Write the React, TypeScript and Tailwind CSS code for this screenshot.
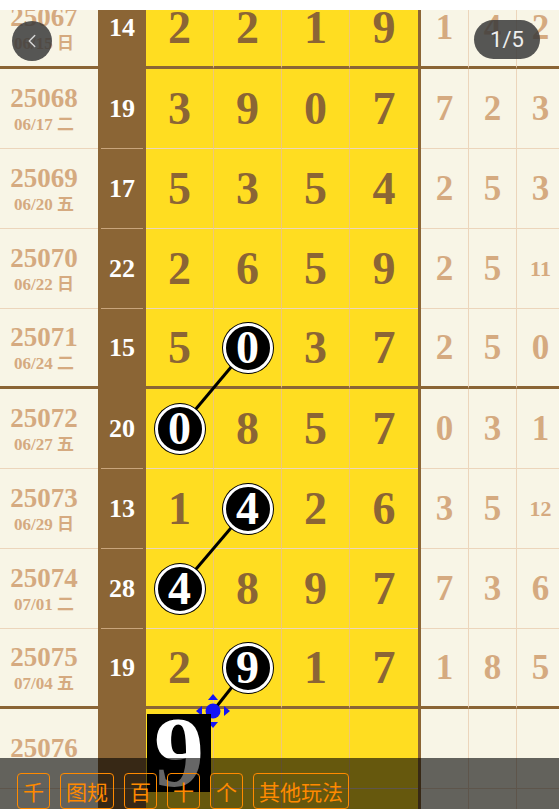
import { ChevronLeft } from "lucide-react";

type Row = {
  issue: string;
  date?: string;
  sum?: number;
  digits: (number | null)[];
  rest: (number | null)[];
  ball?: number;
  thick?: boolean;
};

const rows: Row[] = [
  { issue: "25067", date: "06/15 日", sum: 14, digits: [2, 2, 1, 9], rest: [1, 4, 2], thick: true },
  { issue: "25068", date: "06/17 二", sum: 19, digits: [3, 9, 0, 7], rest: [7, 2, 3] },
  { issue: "25069", date: "06/20 五", sum: 17, digits: [5, 3, 5, 4], rest: [2, 5, 3] },
  { issue: "25070", date: "06/22 日", sum: 22, digits: [2, 6, 5, 9], rest: [2, 5, 11] },
  { issue: "25071", date: "06/24 二", sum: 15, digits: [5, 0, 3, 7], rest: [2, 5, 0], ball: 1, thick: true },
  { issue: "25072", date: "06/27 五", sum: 20, digits: [0, 8, 5, 7], rest: [0, 3, 1], ball: 0 },
  { issue: "25073", date: "06/29 日", sum: 13, digits: [1, 4, 2, 6], rest: [3, 5, 12], ball: 1 },
  { issue: "25074", date: "07/01 二", sum: 28, digits: [4, 8, 9, 7], rest: [7, 3, 6], ball: 0 },
  { issue: "25075", date: "07/04 五", sum: 19, digits: [2, 9, 1, 7], rest: [1, 8, 5], ball: 1, thick: true },
  { issue: "25076", digits: [null, null, null, null], rest: [null, null, null] },
  { issue: "", digits: [null, null, null, null], rest: [null, null, null] },
];

const serif = "font-['Liberation_Serif','Noto_Sans_CJK_SC',serif] font-bold";

function TableRow({ row }: { row: Row }) {
  const line = row.thick ? "border-b-[3px] border-b-[#8b6535]" : "border-b border-b-[#ecd5bb]";
  return (
    <div className="flex h-[80px]">
      {/* issue + date */}
      <div className={`w-[98px] shrink-0 pr-[10px] bg-[#f8f5e6] flex flex-col items-center justify-center text-[#d5aa80] ${serif} ${line}`}>
        <span className="text-[27px] leading-none">{row.issue}</span>
        {row.date && <span className="text-[17px] leading-none mt-[4px] whitespace-nowrap">{row.date}</span>}
      </div>

      {/* sum */}
      <div className="w-[48px] shrink-0 bg-[#8b6535] flex flex-col">
        <div className={`flex-1 flex items-center justify-center text-white text-[26px] leading-none ${serif}`}>
          {row.sum}
        </div>
        {row.thick ? <div className="h-[3px]" /> : <div className="h-px mx-[3px] bg-[#c9a57c]" />}
      </div>

      {/* four digits */}
      {row.digits.map((d, i) => (
        <div
          key={i}
          className={`w-[68px] shrink-0 bg-[#ffdd21] flex items-center justify-center ${line} ${i < 3 ? "border-r border-r-[#efc679]" : ""}`}
        >
          {d !== null &&
            (row.ball === i ? (
              <div className={`relative z-20 w-[50px] h-[50px] rounded-full bg-black border-[3px] border-white ring-1 ring-black flex items-center justify-center text-white text-[46px] leading-none ${serif}`}>
                {d}
              </div>
            ) : (
              <span className={`text-[46px] leading-none text-[#8b6535] ${serif}`}>{d}</span>
            ))}
        </div>
      ))}

      <div className="w-[3px] shrink-0 bg-[#8b6535]" />

      {/* remaining */}
      {row.rest.map((d, i) => (
        <div
          key={i}
          className={`w-[48px] shrink-0 bg-[#f8f5e6] border-r border-r-[#ecd5bb] flex items-center justify-center text-[#d5aa80] leading-none ${serif} ${line}`}
        >
          {d !== null && <span className={d > 9 ? "text-[22px]" : "text-[35px]"}>{d}</span>}
        </div>
      ))}
    </div>
  );
}

export default function App() {
  const buttons = ["千", "图规", "百", "十", "个", "其他玩法"];

  return (
    <div className="relative w-[559px] h-[809px] overflow-hidden bg-white">
      <div className="h-[10px] bg-white" />
      <div className="h-[799px] overflow-hidden">
        <div className="relative -mt-[21px]">
          {rows.map((r) => (
            <TableRow key={r.issue || "empty"} row={r} />
          ))}

          {/* connecting lines + drag handle */}
          <svg className="absolute left-0 top-0 z-10 pointer-events-none" width="559" height="880">
            <line x1="247.5" y1="358.5" x2="179.5" y2="439.5" stroke="#000" strokeWidth="3" />
            <line x1="247.5" y1="519.5" x2="179.5" y2="599.5" stroke="#000" strokeWidth="3" />
            <line x1="247.5" y1="678.5" x2="213" y2="722" stroke="#000" strokeWidth="3" />
            <g fill="#1414f5">
              <circle cx="213" cy="722" r="7.5" />
              <polygon points="213,705 208,711 218,711" />
              <polygon points="213,739 208,733 218,733" />
              <polygon points="196,722 202,717 202,727" />
              <polygon points="230,722 224,717 224,727" />
            </g>
          </svg>

          {/* dragged digit */}
          <div className="absolute left-[147px] top-[725px] z-20 w-[64px] h-[78px] bg-black overflow-hidden flex justify-center">
            <span className={`-mt-[12px] text-[100px] leading-none text-white ${serif}`}>9</span>
          </div>
        </div>
      </div>

      {/* viewer controls */}
      <button className="absolute z-30 left-[12px] top-[21px] w-10 h-10 rounded-full bg-[#3a3a3a]/85 flex items-center justify-center text-[#d8d8d8]">
        <ChevronLeft size={22} strokeWidth={1.5} />
      </button>
      <div className="absolute z-30 left-[474px] top-[20px] w-[66px] h-[39px] rounded-full bg-[#3a3a3a]/85 flex items-center justify-center text-[#eeeeee] text-[22px] font-['Roboto',sans-serif]">
        1/5
      </div>

      {/* bottom bar */}
      <div className="absolute z-30 left-0 right-0 bottom-0 h-[51px] bg-black/60 flex items-start gap-2.5 pl-[17px] pt-[15px]">
        {buttons.map((b) => (
          <button
            key={b}
            className="h-[36px] px-[5px] border border-[#ff8a00] rounded-[4px] text-[#ff8a00] text-[21px] leading-none font-['Noto_Sans_CJK_SC',sans-serif]"
          >
            {b}
          </button>
        ))}
      </div>
    </div>
  );
}
